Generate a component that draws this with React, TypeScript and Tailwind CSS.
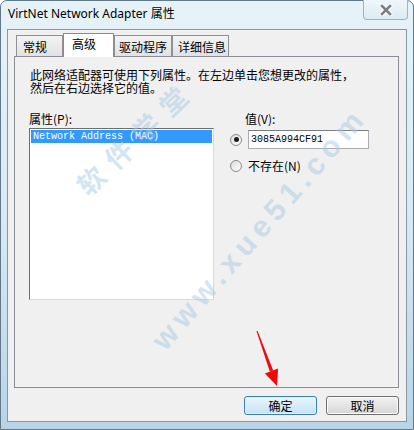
import React from 'react';

const cjk = { fontFamily: '"Noto Sans CJK SC", "Noto Sans", sans-serif' };
const mono = { fontFamily: '"Liberation Mono", "DejaVu Sans Mono", monospace' };

function Radio({ checked }: { checked?: boolean }) {
  return (
    <span className="flex h-[12px] w-[12px] shrink-0 items-center justify-center rounded-full border border-[#8a8a8a] bg-gradient-to-br from-[#dcdcdc] to-[#ffffff]">
      {checked && <span className="h-[5px] w-[5px] rounded-full bg-[#1b1b1b]" />}
    </span>
  );
}

export default function App() {
  const tabs = [
    { label: '常规', w: 'w-[47px]', pl: 'pl-[6px]' },
    { label: '高级', w: 'w-[51px]', pl: 'pl-[8px]', active: true },
    { label: '驱动程序', w: 'w-[58px]', pl: 'pl-[4px]' },
    { label: '详细信息', w: 'w-[57px]', pl: 'pl-[5px]' },
  ];

  return (
    <div className="relative h-[430px] w-[414px] overflow-hidden bg-white" style={cjk}>
      {/* window frame */}
      <div className="flex h-full w-full flex-col rounded-t-[7px] border border-[#62798b] bg-gradient-to-b from-[#e6f3f9] via-[#d8eaf4] to-[#b9d3e6] px-[6px] pb-[7px]">
        {/* title bar */}
        <div className="flex h-[28px] items-start justify-between">
          <span className="pl-[1px] pt-[6px] text-[12px] leading-[14px] text-black" style={{ fontFamily: '"Noto Sans", "Noto Sans CJK SC", sans-serif' }}>
            VirtNet Network Adapter 属性
          </span>
          <div className="-mt-[1px] mr-[-1px] flex h-[20px] w-[45px] items-center justify-center rounded-b-[4px] border border-t-0 border-[#9fb3c2] bg-gradient-to-b from-[#eef7fb] to-[#dcebf3]">
            <svg width="14" height="12" viewBox="0 0 14 12">
              <path d="M3 2 L11 10 M11 2 L3 10" stroke="#ffffff" strokeWidth="5" strokeLinecap="round" />
              <path d="M3 2 L11 10 M11 2 L3 10" stroke="#7d7f82" strokeWidth="2.6" strokeLinecap="square" />
            </svg>
          </div>
        </div>

        {/* client area */}
        <div className="flex flex-1 flex-col border border-[#8797a4] bg-[#f0f0f0] pt-[3px]">
          {/* tabs */}
          <div className="flex h-[23px] items-end pl-[8px]">
            {tabs.map((t) =>
              t.active ? (
                <div
                  key={t.label}
                  className={`relative z-10 -mb-[1px] h-[24px] ${t.w} ${t.pl} border border-b-0 border-[#898c95] bg-white pt-[3px] text-[12px] leading-[14px] text-black`}
                >
                  {t.label}
                </div>
              ) : (
                <div
                  key={t.label}
                  className={`h-[21px] ${t.w} ${t.pl} border border-b-0 border-[#8e9096] bg-gradient-to-b from-[#f3f3f3] to-[#e2e2e2] pt-[4px] text-[12px] leading-[14px] text-black`}
                >
                  {t.label}
                </div>
              )
            )}
          </div>

          {/* panel */}
          <div className="ml-[6px] flex h-[332px] w-[385px] flex-col border border-[#898c95] bg-[#f0f0f0] pl-[14px] pt-[11px]">
            <p className="pl-[1px] text-[12px] leading-[13px] text-black">
              此网络适配器可使用下列属性。在左边单击您想更改的属性，
              <br />
              然后在右边选择它的值。
            </p>

            <div className="mt-[18px] flex">
              {/* left column */}
              <div className="flex w-[185px] flex-col">
                <span className="text-[12px] leading-[14px] text-black">属性(P):</span>
                <div className="mt-[2px] h-[172px] w-[185px] border border-t-[#6e6e6e] border-l-[#6e6e6e] border-r-[#dadada] border-b-[#dadada] bg-white p-[1px]">
                  <div className="flex h-[13px] items-center bg-[#3399ff] pl-[2px] text-[10px] text-white" style={mono}>
                    Network Address (MAC)
                  </div>
                </div>
              </div>

              {/* right column */}
              <div className="ml-[16px] flex flex-col">
                <span className="pl-[15px] text-[12px] leading-[14px] text-black">值(V):</span>
                <div className="mt-[4px] flex items-center gap-[6px]">
                  <Radio checked />
                  <div className="flex h-[19px] w-[121px] items-center border border-[#abadb3] border-t-[#7b7d84] bg-white pl-[2px] text-[10px] text-black" style={mono}>
                    3085A994CF91
                  </div>
                </div>
                <div className="mt-[10px] flex items-center gap-[6px]">
                  <Radio />
                  <span className="text-[12px] leading-[14px] text-black">不存在(N)</span>
                </div>
              </div>
            </div>
          </div>

          {/* buttons */}
          <div className="mt-[8px] flex w-[391px] justify-end gap-[9px]">
            <button className="h-[19px] w-[73px] rounded-[3px] border border-[#3c7fb1] bg-gradient-to-b from-[#eaf6fd] to-[#c4e2f5] text-[12px] leading-[14px] text-black shadow-[inset_0_0_0_1px_#dff1fc]">
              确定
            </button>
            <button className="h-[19px] w-[73px] rounded-[3px] border border-[#707070] bg-gradient-to-b from-[#f2f2f2] to-[#d6d6d6] text-[12px] leading-[14px] text-black shadow-[inset_0_0_0_1px_#fbfbfb]">
              取消
            </button>
          </div>
        </div>
      </div>

      {/* watermark overlay */}
      <div className="pointer-events-none absolute left-[136px] top-[137px] -translate-x-1/2 -translate-y-1/2 -rotate-[44deg] whitespace-nowrap text-[27px] font-bold tracking-[11px] text-[#a9cbe6] opacity-50">
        软件学堂
      </div>
      <div
        className="pointer-events-none absolute left-[259px] top-[228px] -translate-x-1/2 -translate-y-1/2 -rotate-[49deg] whitespace-nowrap text-[30px] font-semibold tracking-[6px] text-[#a9cbe6] opacity-50"
        style={{ fontFamily: '"Liberation Sans", Arial, sans-serif' }}
      >
        www.xue51.com
      </div>

      {/* red arrow overlay */}
      <svg className="pointer-events-none absolute left-0 top-0" width="414" height="430">
        <polygon points="257.5,330.8 256.5,331.2 269.8,371.6 273.2,370.4" fill="#ec0b0b" />
        <polygon points="277,386 264.9,373.4 278.1,368.6" fill="#ec0b0b" />
      </svg>
    </div>
  );
}
